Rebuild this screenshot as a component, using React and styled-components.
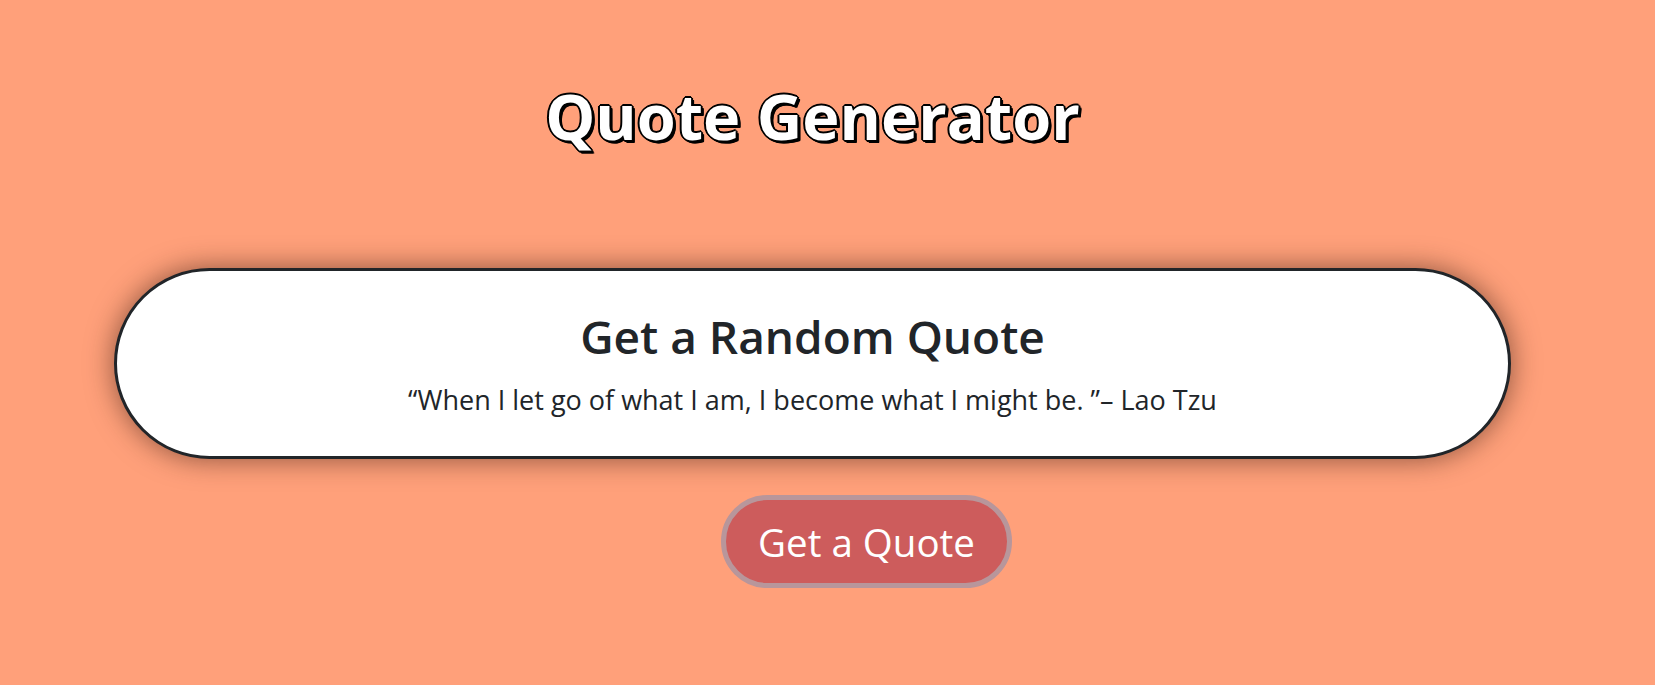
import React from "react";
import styled, { createGlobalStyle } from "styled-components";

const Global = createGlobalStyle`
  html, body { margin: 0; padding: 0; }
  body {
    background: #ffa07a;
    font-family: "Open Sans", "Noto Sans", sans-serif;
    color: #212529;
  }
`;

const Page = styled.main`
  min-height: 100vh;
  box-sizing: border-box;
  padding: 0 144px 40px 114px;
  display: flex;
  flex-direction: column;
  align-items: stretch;
`;

const Title = styled.h1`
  margin: 78px 0 0;
  text-align: center;
  font-size: 63px;
  font-weight: 700;
  line-height: 1.2;
  color: #fff;
  text-shadow:
    -1px -1px 0 #000, 1px -1px 0 #000, -1px 1px 0 #000, 1px 1px 0 #000,
    -2px 0 0 #000, 2px 0 0 #000, 0 -2px 0 #000, 0 2px 0 #000,
    2px 2px 0 #000, 3px 3px 0 #000, 3px 2px 0 #000, 2px 3px 0 #000;
`;

const Card = styled.section`
  margin-top: 114px;
  background: #fff;
  border: 3px solid #212529;
  border-radius: 100px;
  box-shadow: 0 0 28px rgba(60, 30, 20, 0.6);
  padding: 38px 20px 36px;
  display: flex;
  flex-direction: column;
  align-items: center;
  text-align: center;
`;

const CardHeading = styled.h2`
  margin: 0;
  font-size: 46px;
  font-weight: 600;
  line-height: 1.2;
  color: #212529;
`;

const QuoteText = styled.p`
  margin: 16px 0 0;
  font-size: 27px;
  font-weight: 400;
  line-height: 1.5;
  color: #212529;
`;

const ButtonRow = styled.div`
  margin-top: 36px;
  display: flex;
  justify-content: center;
  padding-left: 108px;
`;

const QuoteButton = styled.button`
  height: 93px;
  box-sizing: border-box;
  padding: 0 32px;
  border: 5px solid #b8969b;
  border-radius: 47px;
  background: #cd5c5c;
  color: #fff;
  font-family: "Open Sans", "Noto Sans", sans-serif;
  font-size: 38.5px;
  font-weight: 400;
  cursor: pointer;
`;

export default function App() {
  return (
    <>
      <Global />
      <Page>
        <Title>Quote Generator</Title>
        <Card>
          <CardHeading>Get a Random Quote</CardHeading>
          <QuoteText>“When I let go of what I am, I become what I might be. ”– Lao Tzu</QuoteText>
        </Card>
        <ButtonRow>
          <QuoteButton type="button">Get a Quote</QuoteButton>
        </ButtonRow>
      </Page>
    </>
  );
}
